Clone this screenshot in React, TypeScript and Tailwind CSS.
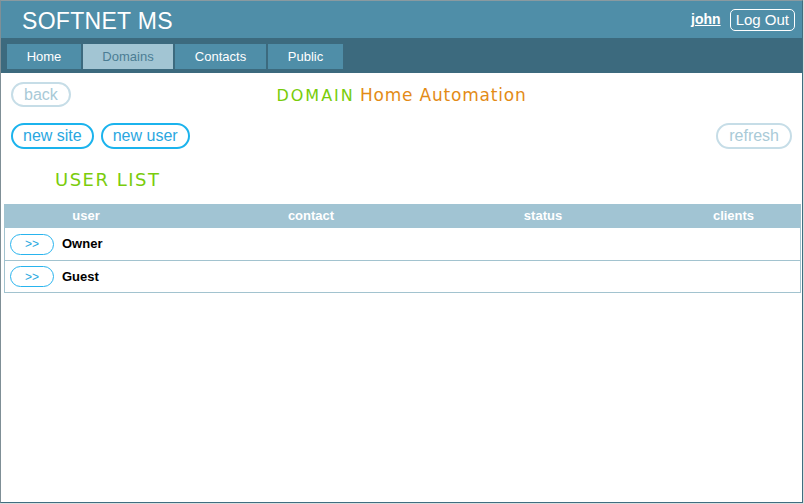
import React from 'react';

const tabs = ['Home', 'Domains', 'Contacts', 'Public'];
const tabWidths = ['w-[74px]', 'w-[90px]', 'w-[91px]', 'w-[75px]'];

const users = ['Owner', 'Guest'];

export default function App() {
    return (
        <div className="w-[804px] h-[504px] bg-[#dcdcdc] font-['Liberation_Sans',Arial,sans-serif]">
            <div className="w-[803px] h-[503px] border border-[#3f6d80] border-t-[#8a9aa0] border-l-[#7f8f96] bg-white flex flex-col">
                {/* Header */}
                <header className="h-[37px] bg-[#4f8ea8] flex items-center justify-between pl-[21px] pr-[7px]">
                    <h1 className="text-white text-[23px] leading-none tracking-[0.3px] mt-[4px]">SOFTNET MS</h1>
                    <div className="flex items-center gap-[9px]">
                        <a href="#" className="text-white font-bold text-[14px] underline">john</a>
                        <button className="text-white text-[15px] leading-none border border-white rounded-[5px] px-[5px] h-[22px]">
                            Log Out
                        </button>
                    </div>
                </header>

                {/* Nav */}
                <nav className="h-[35px] bg-[#3c6a7e] flex gap-[2px] pl-[6px] pt-[6px]">
                    {tabs.map((t, i) => (
                        <div
                            key={t}
                            className={`${tabWidths[i]} h-[25px] flex items-center justify-center text-[13px] ${
                                t === 'Domains' ? 'bg-[#a2c5d3] text-[#4b7d93]' : 'bg-[#4f8ea8] text-white'
                            }`}
                        >
                            {t}
                        </div>
                    ))}
                </nav>

                {/* Content */}
                <main className="flex flex-col pt-[9px]">
                    <div className="grid grid-cols-[1fr_auto_1fr] items-center px-[10px]">
                        <div>
                            <button className="h-[25px] px-[11px] rounded-full border-2 border-[#c6dde7] text-[#a9cad7] text-[16px] leading-none">
                                back
                            </button>
                        </div>
                        <h2 className="font-['DejaVu_Sans',Verdana,sans-serif] leading-none mt-[1px] whitespace-nowrap">
                            <span className="text-[#78cc0a] text-[16px] tracking-[2px]">DOMAIN</span>{' '}
                            <span className="text-[#e38b16] text-[17px] tracking-[0.8px]">Home Automation</span>
                        </h2>
                        <div />
                    </div>

                    <div className="flex items-center justify-between px-[10px] mt-[16px]">
                        <div className="flex gap-[7px]">
                            <button className="h-[26px] px-[10px] rounded-full border-2 border-[#1bb3ed] text-[#2aa7df] text-[16px] leading-none">
                                new site
                            </button>
                            <button className="h-[26px] px-[10px] rounded-full border-2 border-[#1bb3ed] text-[#2aa7df] text-[16px] leading-none">
                                new user
                            </button>
                        </div>
                        <button className="h-[26px] px-[11px] rounded-full border-2 border-[#c6dde7] text-[#a9cad7] text-[16px] leading-none">
                            refresh
                        </button>
                    </div>

                    <h3 className="font-['DejaVu_Sans',Verdana,sans-serif] text-[18px] leading-none text-[#7acc0c] tracking-[1.5px] pl-[54px] mt-[22px]">
                        USER LIST
                    </h3>

                    {/* Table */}
                    <div className="ml-[3px] w-[797px] mt-[15px] border-x border-b border-[#a2c3cf]">
                        <div className="grid grid-cols-[162px_288px_176px_1fr] h-[24px] bg-[#a1c4d3] text-white font-bold text-[13px] items-center">
                            <div className="text-center">user</div>
                            <div className="text-center">contact</div>
                            <div className="text-center">status</div>
                            <div className="text-center pl-[36px]">clients</div>
                        </div>
                        {users.map((u, i) => (
                            <div
                                key={u}
                                className={`h-[32px] flex items-center gap-[8px] pl-[5px] ${i > 0 ? 'border-t border-[#a2c3cf]' : ''}`}
                            >
                                <button className="w-[44px] h-[21px] rounded-full border border-[#29b4ee] text-[#2aa7df] text-[12px] leading-none">
                                    &gt;&gt;
                                </button>
                                <span className="font-bold text-[13px] text-black">{u}</span>
                            </div>
                        ))}
                    </div>
                </main>
            </div>
        </div>
    );
}
